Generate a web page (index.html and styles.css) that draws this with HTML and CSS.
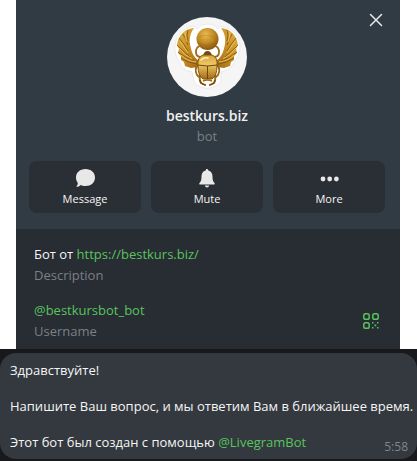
FILE: index.html
```html
<!DOCTYPE html>
<html lang="ru">
<head>
  <meta charset="UTF-8" />
  <meta name="viewport" content="width=device-width, initial-scale=1.0" />
  <title>bestkurs.biz</title>
  <link rel="stylesheet" href="styles.css">
</head>
<body>
  <section class="profile">
    <header class="profile-head">
      <button type="button" class="close" aria-label="Close">
        <svg width="14" height="14" viewBox="0 0 14 14"><path d="M1.5 1.5 L12.5 12.5 M12.5 1.5 L1.5 12.5" stroke="#e6e8e9" stroke-width="1.5" stroke-linecap="round"/></svg>
      </button>

      <svg class="avatar" viewBox="0 0 80 80" role="img" aria-label="bestkurs.biz">
        <defs>
          <radialGradient id="sun" cx="0.42" cy="0.3" r="0.75">
            <stop offset="0" stop-color="#e9bd50"/>
            <stop offset="0.5" stop-color="#c38b25"/>
            <stop offset="1" stop-color="#7d4f0b"/>
          </radialGradient>
          <linearGradient id="gold" x1="0" y1="0" x2="1" y2="1">
            <stop offset="0" stop-color="#e2b548"/>
            <stop offset="0.5" stop-color="#c98f24"/>
            <stop offset="1" stop-color="#a06a12"/>
          </linearGradient>
          <linearGradient id="shell" x1="0" y1="0" x2="0" y2="1">
            <stop offset="0" stop-color="#d6a33a"/>
            <stop offset="0.4" stop-color="#edc866"/>
            <stop offset="1" stop-color="#a16b12"/>
          </linearGradient>
          <g id="wing">
            <path d="M27 11 C17 12 11 19 10 28 L12 32 L11 36 L14 39 L14 43 L17 45 L18 49 L24 51 L31 50 L31 43 C26 40 24 33 23 27 C22 20 24 15 27 11 Z" fill="url(#gold)"/>
            <path d="M12 21 Q17 27 21 34 M10 28 Q16 34 23 40 M11 35 Q18 41 27 44 M14 41 Q21 46 30 47 M16 17 Q19 22 21 28 M21 13 Q19 18 21 24" fill="none" stroke="#80510e" stroke-width="0.8"/>
            <path d="M13 24 Q17 30 21 36 M12 31 Q17 38 25 42 M14 38 Q20 44 29 45 M18 15 Q18 20 20 25" fill="none" stroke="#efcd70" stroke-width="0.8"/>
            <path d="M34 40 Q29 40 29 35 Q29 30 33 29 M31 48 Q27 52 30 58 L33 61 M33 58 Q32 63 34 66 L38 68" fill="none" stroke="#9e6b18" stroke-width="1.8" stroke-linecap="round"/>
            <path d="M33 63 Q33 67 39 68" fill="none" stroke="#754909" stroke-width="1.2"/>
          </g>
        </defs>
        <circle cx="40" cy="40" r="40" fill="#f5f5f5"/>
        <path d="M26 9 Q29 9 30 12 Q34 7 40 7 Q47 7 51 12 Q52 8 57 10 Q72 14 73 29 Q73 39 67 45 Q65 52 54 55 L54 64 Q52 69 43 71 H37 Q29 69 27 64 L25 55 Q15 53 13 46 Q7 38 8 28 Q9 14 26 9 Z" fill="#fff" stroke="#e2e2e2" stroke-width="0.7"/>
        <use href="#wing"/>
        <use href="#wing" transform="translate(81 0) scale(-1 1)"/>
        <circle cx="40.5" cy="22" r="11" fill="url(#sun)"/>
        <path d="M31 26 Q40 31 50 25 M32 20 Q40 16 48 21" fill="none" stroke="#8a560e" stroke-width="0.7" opacity="0.4"/>
        <path d="M36 39 Q37 34 40.5 34 Q44 34 45 39 Z" fill="#74490b"/>
        <path d="M31 49 Q30 40 36 38 H45 Q51 40 50 49 Q50 59 45 62 H36 Q31 59 31 49 Z" fill="url(#shell)" stroke="#84540d" stroke-width="1"/>
        <path d="M31 48 Q40.5 50 50 48 M40.5 49 V62" fill="none" stroke="#714507" stroke-width="1"/>
        <path d="M34 43 Q37 40 41 41" fill="none" stroke="#fff0ae" stroke-width="1.5" stroke-linecap="round"/>
        <path d="M36 64 Q40.5 62 45 64" fill="none" stroke="#9e6b18" stroke-width="1.5"/>
      </svg>

      <h1 class="name">bestkurs.biz</h1>
      <p class="status">bot</p>

      <div class="actions">
        <button type="button" class="action">
          <svg width="20" height="20" viewBox="0 0 20 20"><path d="M10.5 1 C16 1 20 4.500 20 9.500 C20 14.500 16 18 10.500 18 C8.500 18 7 17.700 5.600 17 C4.500 18.300 3.200 18.800 1.800 18.800 C1.400 18.800 1.300 18.500 1.600 18.200 C2.600 17.200 2.900 16 2.700 14.800 C1.600 13.300 1 11.500 1 9.500 C1 4.500 5 1 10.500 1 Z" fill="#e8e8e8"/></svg>
          Message
        </button>
        <button type="button" class="action">
          <svg width="20" height="20" viewBox="0 0 20 20"><path d="M10 1 C10.800 1 11.300 1.500 11.300 2.500 C14.300 3.200 15.500 5.500 15.500 8.500 C15.500 12 16 13.500 17.500 15 C18 15.800 17.700 16.500 17 16.500 H3 C2.300 16.500 2 15.800 2.500 15 C4 13.500 4.500 12 4.500 8.500 C4.500 5.500 5.700 3.200 8.700 2.500 C8.700 1.500 9.200 1 10 1 Z M7.800 17.600 H12.200 Q11.800 19.600 10 19.600 Q8.200 19.600 7.800 17.600 Z" fill="#e8e8e8"/></svg>
          Mute
        </button>
        <button type="button" class="action">
          <svg width="20" height="20" viewBox="0 0 20 20"><g fill="#e8e8e8"><circle cx="4" cy="11" r="2.400"/><circle cx="10.700" cy="11" r="2.400"/><circle cx="17.400" cy="11" r="2.400"/></g></svg>
          More
        </button>
      </div>
    </header>

    <div class="info">
      <div class="info-row">
        <div>
          <p class="value">Бот от <a href="https://bestkurs.biz/">https://bestkurs.biz/</a></p>
          <p class="label">Description</p>
        </div>
      </div>
      <div class="info-row">
        <div>
          <p class="value"><a href="#">@bestkursbot_bot</a></p>
          <p class="label">Username</p>
        </div>
        <button type="button" class="qr" aria-label="QR code">
          <svg width="16" height="16" viewBox="0 0 16 16">
            <g fill="none" stroke="#58c45e" stroke-width="1.5">
              <rect x="0.800" y="0.800" width="5.400" height="5.400" rx="1.800"/>
              <rect x="9.800" y="0.800" width="5.400" height="5.400" rx="1.800"/>
              <rect x="0.800" y="9.800" width="5.400" height="5.400" rx="1.800"/>
            </g>
            <path d="M9 9h1.500v1.500H9z M14 9h1.500v1.500H14z M11.500 11.500h1.800v1.800h-1.800z M9 14h1.500v1.500H9z M14 14h1.500v1.500H14z" fill="#58c45e"/>
          </svg>
        </button>
      </div>
    </div>
  </section>

  <main class="chat">
    <div class="bubble">
      <div class="message">
        <p>Здравствуйте!</p>
        <p>Напишите Ваш вопрос, и мы ответим Вам в ближайшее время.</p>
        <p>Этот бот был создан с помощью <a href="#">@LivegramBot</a></p>
      </div>
      <time class="time">5:58</time>
    </div>
  </main>
</body>
</html>
```
FILE: styles.css
```css
* {
  box-sizing: border-box;
}

body {
  margin: 0;
  background: #ffffff;
  font-family: "Open Sans", "Noto Sans", sans-serif;
  font-size: 13px;
  line-height: 18px;
  color: #f5f5f5;
}

h1, p {
  margin: 0;
}

a {
  color: #58c45e;
  text-decoration: none;
}

button {
  border: none;
  padding: 0;
  background: none;
  font-family: inherit;
  color: inherit;
  cursor: pointer;
}

svg {
  display: block;
}

.profile {
  margin: 0 17px 0 16px;
  background: #282c33;
}

.profile-head {
  position: relative;
  display: flex;
  flex-direction: column;
  align-items: center;
  padding: 17px 15px 16px 13px;
  background: #313b43;
}

.close {
  position: absolute;
  top: 13px;
  right: 17px;
}

.avatar {
  width: 80px;
  height: 80px;
}

.name {
  margin-top: 8px;
  font-size: 14px;
  font-weight: 600;
  line-height: 22px;
  color: #f0f0f0;
}

.status {
  line-height: 18px;
  color: #7b8085;
}

.actions {
  display: flex;
  gap: 10px;
  width: 100%;
  margin-top: 16px;
}

.action {
  flex: 1;
  display: flex;
  flex-direction: column;
  align-items: center;
  gap: 3px;
  padding: 7px 0 6px;
  border-radius: 8px;
  background: #2a2e35;
  font-size: 11px;
  line-height: 16px;
}

.info {
  display: flex;
  flex-direction: column;
  gap: 17px;
  padding: 16px 21px 9px 18px;
}

.info-row {
  display: flex;
  align-items: center;
  justify-content: space-between;
}

.value {
  margin-bottom: 3px;
}

.label {
  color: #7b8085;
}

.chat {
  padding: 4px 0 2px;
  background: #17191d;
}

.bubble {
  display: flex;
  align-items: flex-end;
  justify-content: space-between;
  padding: 8px 9px 3px 10px;
  border-radius: 16px;
  background: #33393f;
}

.message {
  display: flex;
  flex-direction: column;
  gap: 18px;
  padding-bottom: 5px;
  white-space: nowrap;
}

.time {
  margin-left: -40px;
  font-size: 12px;
  color: #7d868d;
}
```
